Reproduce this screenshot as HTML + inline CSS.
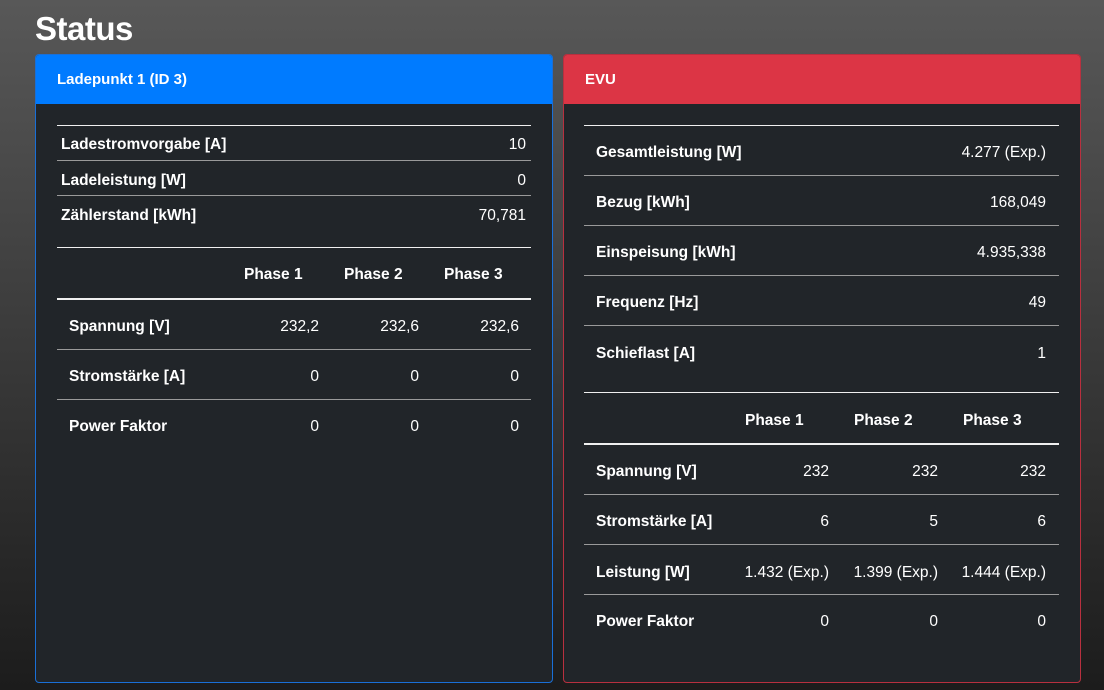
<!DOCTYPE html>
<html><head><meta charset="utf-8"><style>
*{margin:0;padding:0;box-sizing:border-box}
body{width:1104px;height:690px;overflow:hidden;background:linear-gradient(#585858,#1c1c1c);font-family:"Liberation Sans",sans-serif;color:#fff;position:relative}
h1{position:absolute;left:35px;top:10px;font-size:33px;font-weight:bold;letter-spacing:-0.5px}
.card{position:absolute;top:54px;height:629px;width:518px;background:#212529;border-radius:4px;overflow:hidden}
.hd{height:50px;padding-left:22px;line-height:52px;font-weight:bold;font-size:15px}
.l{position:absolute;height:1px;background:#9a9a9a}
.w{background:#f0f0f0}
.t{position:absolute;font-size:15.5px;white-space:nowrap;transform:translateY(calc(-50% + 2px))}
.b{font-weight:bold}
.r{text-align:right;transform:translate(-100%,calc(-50% + 2px))}
</style></head><body>
<h1>Status</h1>
<div class="card" style="left:35px;border:1px solid #1a6fd6"><div class="hd" style="background:#007bff;margin:-1px -1px 0">Ladepunkt 1 (ID 3)</div></div>
<div class="card" style="left:563px;border:1px solid #b8303f"><div class="hd" style="background:#dc3545;margin:-1px -1px 0">EVU</div></div>

<!-- left -->
<div class="l w" style="left:57px;width:474px;top:125px"></div>
<div class="l" style="left:57px;width:474px;top:160px"></div>
<div class="l" style="left:57px;width:474px;top:195px"></div>
<div class="l w" style="left:57px;width:474px;top:247px"></div>
<div class="l w" style="left:57px;width:474px;top:298px;height:2px"></div>
<div class="l" style="left:57px;width:474px;top:349px"></div>
<div class="l" style="left:57px;width:474px;top:399px"></div>
<div class="t b" style="left:61px;top:143px">Ladestromvorgabe [A]</div><div class="t r" style="left:526px;top:143px">10</div>
<div class="t b" style="left:61px;top:179px">Ladeleistung [W]</div><div class="t r" style="left:526px;top:179px">0</div>
<div class="t b" style="left:61px;top:214px">Zählerstand [kWh]</div><div class="t r" style="left:526px;top:214px">70,781</div>
<div class="t b" style="left:244px;top:273px">Phase 1</div><div class="t b" style="left:344px;top:273px">Phase 2</div><div class="t b" style="left:444px;top:273px">Phase 3</div>
<div class="t b" style="left:69px;top:325px">Spannung [V]</div><div class="t r" style="left:319px;top:325px">232,2</div><div class="t r" style="left:419px;top:325px">232,6</div><div class="t r" style="left:519px;top:325px">232,6</div>
<div class="t b" style="left:69px;top:375px">Stromstärke [A]</div><div class="t r" style="left:319px;top:375px">0</div><div class="t r" style="left:419px;top:375px">0</div><div class="t r" style="left:519px;top:375px">0</div>
<div class="t b" style="left:69px;top:425px">Power Faktor</div><div class="t r" style="left:319px;top:425px">0</div><div class="t r" style="left:419px;top:425px">0</div><div class="t r" style="left:519px;top:425px">0</div>

<!-- right -->
<div class="l w" style="left:584px;width:475px;top:125px"></div>
<div class="l" style="left:584px;width:475px;top:175px"></div>
<div class="l" style="left:584px;width:475px;top:225px"></div>
<div class="l" style="left:584px;width:475px;top:275px"></div>
<div class="l" style="left:584px;width:475px;top:325px"></div>
<div class="l w" style="left:584px;width:475px;top:392px"></div>
<div class="l w" style="left:584px;width:475px;top:443px;height:2px"></div>
<div class="l" style="left:584px;width:475px;top:494px"></div>
<div class="l" style="left:584px;width:475px;top:544px"></div>
<div class="l" style="left:584px;width:475px;top:594px"></div>
<div class="t b" style="left:596px;top:151px">Gesamtleistung [W]</div><div class="t r" style="left:1046px;top:151px">4.277 (Exp.)</div>
<div class="t b" style="left:596px;top:201px">Bezug [kWh]</div><div class="t r" style="left:1046px;top:201px">168,049</div>
<div class="t b" style="left:596px;top:251px">Einspeisung [kWh]</div><div class="t r" style="left:1046px;top:251px">4.935,338</div>
<div class="t b" style="left:596px;top:301px">Frequenz [Hz]</div><div class="t r" style="left:1046px;top:301px">49</div>
<div class="t b" style="left:596px;top:352px">Schieflast [A]</div><div class="t r" style="left:1046px;top:352px">1</div>
<div class="t b" style="left:745px;top:419px">Phase 1</div><div class="t b" style="left:854px;top:419px">Phase 2</div><div class="t b" style="left:963px;top:419px">Phase 3</div>
<div class="t b" style="left:596px;top:470px">Spannung [V]</div><div class="t r" style="left:829px;top:470px">232</div><div class="t r" style="left:938px;top:470px">232</div><div class="t r" style="left:1046px;top:470px">232</div>
<div class="t b" style="left:596px;top:520px">Stromstärke [A]</div><div class="t r" style="left:829px;top:520px">6</div><div class="t r" style="left:938px;top:520px">5</div><div class="t r" style="left:1046px;top:520px">6</div>
<div class="t b" style="left:596px;top:571px">Leistung [W]</div><div class="t r" style="left:829px;top:571px">1.432 (Exp.)</div><div class="t r" style="left:938px;top:571px">1.399 (Exp.)</div><div class="t r" style="left:1046px;top:571px">1.444 (Exp.)</div>
<div class="t b" style="left:596px;top:620px">Power Faktor</div><div class="t r" style="left:829px;top:620px">0</div><div class="t r" style="left:938px;top:620px">0</div><div class="t r" style="left:1046px;top:620px">0</div>
</body></html>
